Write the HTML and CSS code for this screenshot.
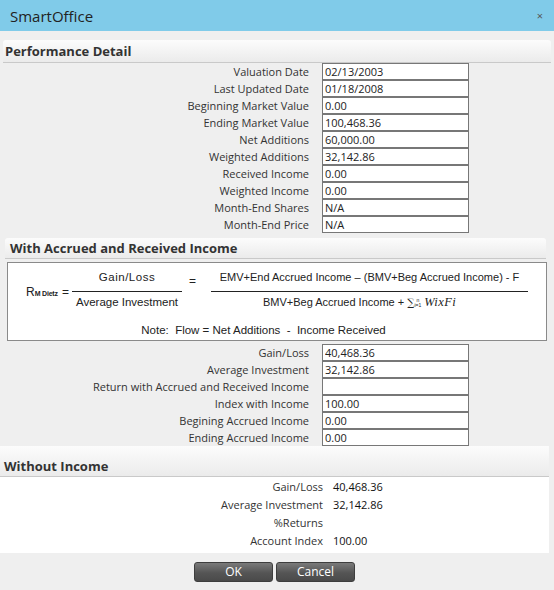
FILE: index.html
```html
<!DOCTYPE html>
<html>
<head>
<meta charset="utf-8">
<title>SmartOffice</title>
<link rel="stylesheet" href="styles.css">
</head>
<body>
<div class="dialog">
  <div class="titlebar"><span class="title">SmartOffice</span><span class="close">×</span></div>

  <div class="section-head perf">Performance Detail</div>
  <div class="fields">
    <label>Valuation Date</label><input readonly value="02/13/2003">
    <label>Last Updated Date</label><input readonly value="01/18/2008">
    <label>Beginning Market Value</label><input readonly value="0.00">
    <label>Ending Market Value</label><input readonly value="100,468.36">
    <label>Net Additions</label><input readonly value="60,000.00">
    <label>Weighted Additions</label><input readonly value="32,142.86">
    <label>Received Income</label><input readonly value="0.00">
    <label>Weighted Income</label><input readonly value="0.00">
    <label>Month-End Shares</label><input readonly value="N/A">
    <label>Month-End Price</label><input readonly value="N/A">
  </div>

  <div class="section-head accrued">With Accrued and Received Income</div>
  <div class="formula">
    <div class="eq">
      <div class="rm">R<span class="rsub">M Dietz</span> =</div>
      <div class="frac left"><div class="num gl">Gain/Loss</div><div class="den">Average Investment</div></div>
      <div class="eqsign">=</div>
      <div class="frac right">
        <div class="num">EMV+End Accrued Income – (BMV+Beg Accrued Income) - F</div>
        <div class="den shifted">BMV+Beg Accrued Income + <span class="sum">∑</span><span class="lim"><span>n</span><span>i=1</span></span> <span class="math">WixFi</span></div>
      </div>
    </div>
    <div class="note">Note:  Flow = Net Additions  -  Income Received</div>
  </div>

  <div class="fields second">
    <label>Gain/Loss</label><input readonly value="40,468.36">
    <label>Average Investment</label><input readonly value="32,142.86">
    <label>Return with Accrued and Received Income</label><input readonly value="">
    <label>Index with Income</label><input readonly value="100.00">
    <label>Begining Accrued Income</label><input readonly value="0.00">
    <label>Ending Accrued Income</label><input readonly value="0.00">
  </div>

  <div class="panel">
    <div class="section-head without">Without Income</div>
    <div class="values">
      <span class="vl">Gain/Loss</span><span class="vv">40,468.36</span>
      <span class="vl">Average Investment</span><span class="vv">32,142.86</span>
      <span class="vl">%Returns</span><span class="vv"></span>
      <span class="vl">Account Index</span><span class="vv">100.00</span>
    </div>
  </div>

  <div class="buttons">
    <button class="btn">OK</button><button class="btn">Cancel</button>
  </div>
</div>
</body>
</html>
```

FILE: styles.css
```css
* { box-sizing: border-box; }

body {
  margin: 0;
  background: #efefef;
  font-family: "Open Sans", "DejaVu Sans", sans-serif;
  color: #333;
}

.dialog {
  width: 554px;
}

.titlebar {
  height: 31px;
  background: #80cbe9;
  display: flex;
  align-items: center;
  justify-content: space-between;
  padding: 0 11px 0 10px;
}

.title {
  font-size: 15px;
  color: #222;
}

.close {
  font-size: 11px;
  color: #555;
}

.section-head {
  font-weight: 700;
  font-size: 13px;
  color: #333;
  background: linear-gradient(to bottom, #fcfcfc, #ebebeb);
  border-bottom: 1px solid #c9c9c9;
  border-radius: 3px 3px 0 0;
}

.perf {
  margin: 9px 3px 0 3px;
  padding-left: 2px;
  line-height: 22px;
}

.fields {
  display: grid;
  grid-template-columns: 309px 147px;
  grid-auto-rows: 17px;
  column-gap: 13px;
}

.fields label {
  font-size: 11px;
  line-height: 17px;
  text-align: right;
  color: #333;
}

.fields input {
  height: 17px;
  width: 147px;
  margin: 0;
  border: 1px solid #777;
  background: #fff;
  padding: 0 2px;
  font-family: "Open Sans", "DejaVu Sans", sans-serif;
  font-size: 11px;
  color: #222;
  outline: none;
}

.accrued {
  margin: 5px 8px 0 5px;
  padding-left: 5px;
  line-height: 20px;
}

.formula {
  margin: 3px 7px 0 7px;
  height: 79px;
  border: 1px solid #8a8a8a;
  background: #fff;
  font-family: "Liberation Sans", Arial, sans-serif;
  color: #222;
  font-size: 11px;
}

.eq {
  display: flex;
  padding: 6px 0 0 18px;
  height: 47px;
}

.rm {
  width: 46px;
  font-size: 12px;
  margin-top: 15px;
  line-height: 16px;
}

.rsub {
  font-size: 7px;
  font-weight: 700;
  letter-spacing: -0.2px;
  margin-right: 1px;
}

.frac {
  display: flex;
  flex-direction: column;
  text-align: center;
}

.frac .num {
  line-height: 16px;
  padding-bottom: 6px;
  border-bottom: 1px solid #222;
}

.frac .den {
  line-height: 16px;
  padding-top: 2px;
}

.left {
  width: 110px;
  font-size: 11.5px;
}

.gl {
  letter-spacing: 0.5px;
}

.eqsign {
  margin: 4px 15px 0 7px;
  line-height: 16px;
  font-size: 12px;
}

.right {
  width: 317px;
}

.shifted {
  padding-right: 20px;
}

.sum {
  font-family: "DejaVu Serif", serif;
  font-size: 10px;
}

.lim {
  display: inline-flex;
  flex-direction: column;
  font-size: 5px;
  line-height: 5px;
  vertical-align: middle;
}

.math {
  font-family: "Liberation Serif", serif;
  font-style: italic;
  font-size: 12.5px;
  letter-spacing: 0.4px;
}

.note {
  margin-top: 12px;
  line-height: 16px;
  text-align: center;
  padding-right: 27px;
  white-space: pre;
  font-size: 11.5px;
}

.second {
  margin-top: 3px;
}

.panel {
  width: 549px;
  background: #fff;
  padding-bottom: 3px;
}

.without {
  padding: 10px 0 0 4px;
  line-height: 20px;
  border-radius: 0;
}

.values {
  display: grid;
  grid-template-columns: 323px auto;
  grid-auto-rows: 18px;
  column-gap: 10px;
  padding-top: 1px;
  font-size: 11px;
  line-height: 18px;
}

.vl {
  text-align: right;
  color: #333;
}

.vv {
  color: #111;
}

.buttons {
  width: 549px;
  margin-top: 9px;
  display: flex;
  justify-content: center;
  gap: 3px;
}

.btn {
  width: 79px;
  height: 20px;
  padding: 0;
  border: 1px solid #3e3e3e;
  border-radius: 3px;
  background: linear-gradient(to bottom, #7a7a7a, #555 55%, #4a4a4a);
  color: #fff;
  font-family: "Open Sans", "DejaVu Sans", sans-serif;
  font-size: 12px;
  line-height: 18px;
}
```
